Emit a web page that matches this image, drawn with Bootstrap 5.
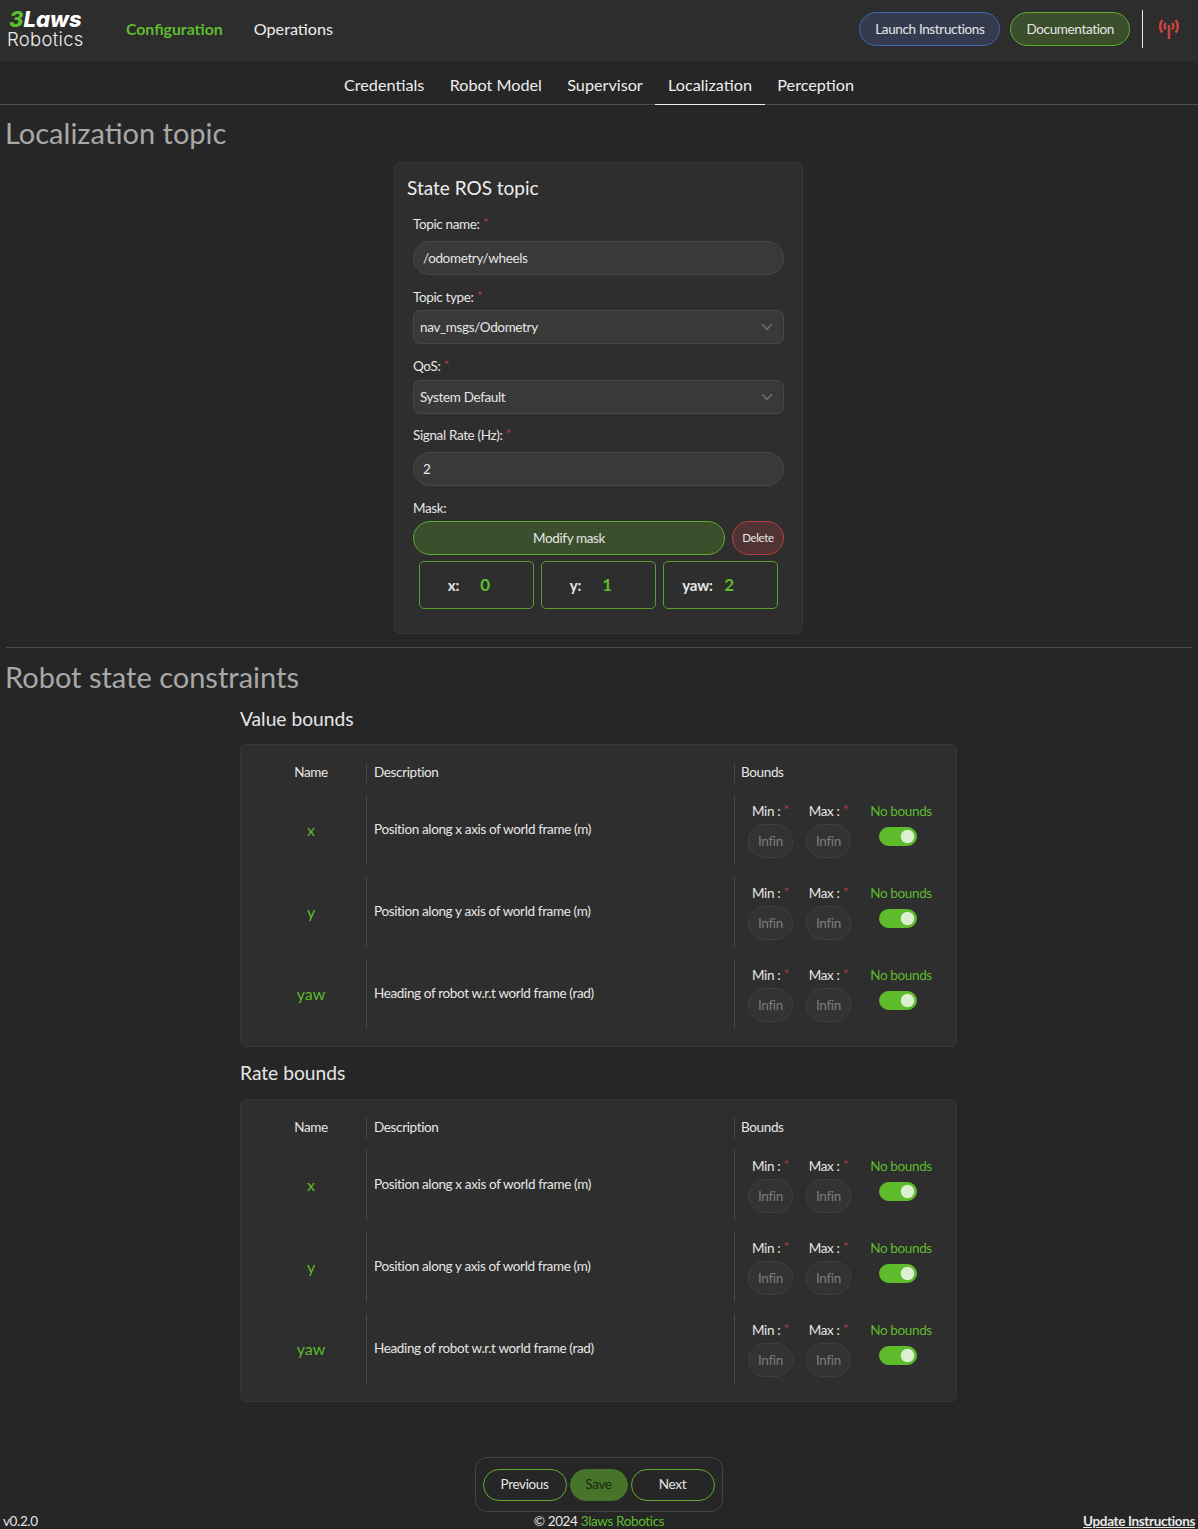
<!DOCTYPE html>
<html lang="en" data-bs-theme="dark">
<head>
    <meta charset="UTF-8">
    <meta name="viewport" content="width=device-width, initial-scale=1.0">
    <title>3Laws Robotics</title>
    <link href="https://cdn.jsdelivr.net/npm/bootstrap@5.3.3/dist/css/bootstrap.min.css" rel="stylesheet">
    <script src="https://cdn.jsdelivr.net/npm/bootstrap@5.3.3/dist/js/bootstrap.bundle.min.js"></script>
    <style>
        body { background: #262626; color: #e6e6e6; font-family: "Lato", "Liberation Sans", sans-serif; font-size: 13.5px; letter-spacing: -.36px; }
        button, input, select { letter-spacing: inherit; }
        .top-bar { height: 61px; background: #2d2d2d; padding: 0 19px 3px 8px; }
        .brand-box { width: 76px; line-height: 1; color: #eee; font-family: "Inter", sans-serif; margin-right: 42px; letter-spacing: 0; }
        .brand-top { font-weight: 800; font-style: italic; font-size: 22px; letter-spacing: 0; height: 20px; line-height: 20px; color: #fff; padding-left: 1px; }
        .brand-top span { color: #5dbb2c; }
        .brand-sub { font-weight: 300; font-size: 18.5px; height: 20px; line-height: 20px; letter-spacing: .3px; margin-left: -1px; white-space: nowrap; }
        .top-link { color: #eee; text-decoration: none; font-size: 16.2px; margin-right: 31px; letter-spacing: 0; }
        .top-link.on { color: #5dbb2c; font-weight: 700; font-size: 15.8px; }
        .pill-btn { height: 34px; border-radius: 17px; padding: 0 15px; font-size: 13.5px; color: #e6e6e6; display: inline-flex; align-items: center; justify-content: center; }
        .pill-blue { background: #353b4e; border: 1px solid #3d66ad; margin-right: 10px; }
        .pill-green { background: #3b4f2d; border: 1px solid #5dab2c; }
        .pill-red { background: #513333; border: 1px solid #b84040; padding: 0; width: 52px; font-size: 11.5px; }
        .pill-line { background: transparent; border: 1px solid #5dab2c; flex: 1 1 0; height: 32px; }
        .pill-save { background: #467429; border: 1px solid #467429; color: #1d2816; width: 58px; padding: 0; height: 32px; }
        .top-sep { width: 1px; height: 38px; background: #e6e6e6; margin: 0 16px 0 12px; }
        .sub-tabs { height: 44px; border-bottom: 1px solid #4d4d4d; }
        .sub-tab { color: #eee; text-decoration: none; font-size: 16.2px; letter-spacing: 0; padding: 5px 12.7px 0; height: 43px; display: flex; align-items: center; }
        .sub-tab.on { border-bottom: 1px solid #eee; height: 44px; }
        .page-main { padding-right: 1px; }
        .sec-title { font-size: 29px; font-weight: 400; letter-spacing: 0; color: #a8a8a8; padding-left: 5px; margin: 0; line-height: 36px; }
        .sec-first { margin-top: 10px; }
        .panel-box { background: #2e2e2e; border: 1px solid #363636; border-radius: 6px; }
        .topic-box { width: 409px; height: 472px; margin: 11px auto 0; padding: 12px 18px 0 18px; }
        .topic-title { font-size: 19px; letter-spacing: 0; line-height: 26px; color: #eee; margin: 0 0 15px -6px; font-weight: 400; }
        .fld-label { display: block; font-size: 13.5px; line-height: 17px; margin-bottom: 8px; color: #e6e6e6; }
        .lab-4 { margin-bottom: 4px; }
        .lab-5 { margin-bottom: 5px; }
        .req { color: #a83a3a; font-size: 14px; line-height: 0; vertical-align: 1px; }
        .fld-input { height: 34px; background: #393939; border: 1px solid #484848; border-radius: 17px; font-size: 13.5px; color: #e6e6e6; padding: 0 9px; box-shadow: none; }
        .fld-select { height: 34px; background-color: #393939; border: 1px solid #484848; border-radius: 7px; font-size: 13.5px; color: #e6e6e6; padding: 0 30px 0 6px; box-shadow: none;
            background-image: url("data:image/svg+xml,%3csvg xmlns='http://www.w3.org/2000/svg' viewBox='0 0 16 16'%3e%3cpath fill='none' stroke='%236b7280' stroke-linecap='round' stroke-linejoin='round' stroke-width='2' d='m2 5 6 6 6-6'/%3e%3c/svg%3e");
            background-size: 12px 12px; background-position: right 10px center; }
        .gap-14 { margin-bottom: 14px; }
        .gap-13 { margin-bottom: 13px; }
        .mask-btns { gap: 7px; }
        .mask-list { padding: 0 6px; gap: 7px; margin-top: 6px; }
        .mask-cell { flex: 1 1 0; height: 48px; border: 1px solid #5a9e2f; border-radius: 5px; font-weight: 700; font-size: 15px; letter-spacing: -.2px; color: #e6e6e6; }
        .mask-key { width: 57px; padding-left: 10px; text-align: center; white-space: nowrap; }
        .mask-val { width: 16px; text-align: center; color: #5dbb2c; font-size: 17px; }
        .rule-line { height: 1px; background: #4a4a4a; margin: 13px 5px 11px 6px; }
        .bounds-wrap { width: 717px; margin: 12px auto 0; }
        .bounds-title { font-size: 19.2px; font-weight: 400; letter-spacing: 0; color: #e6e6e6; line-height: 24px; margin: 0 0 13px; }
        .bounds-box + .bounds-title { margin-bottom: 14px; }
        .bounds-box { padding: 18px 0 17px 15px; margin-bottom: 14px; }
        .grid-row { display: flex; margin-bottom: 12px; }
        .grid-row:last-child { margin-bottom: 0; }
        .cell-name { width: 110px; display: flex; align-items: center; justify-content: center; flex: none; }
        .cell-name.val { color: #5dbb2c; font-size: 16px; letter-spacing: 0; }
        .cell-desc { width: 368px; flex: none; border-left: 1px solid #484848; padding-left: 7px; display: flex; align-items: center; }
        .cell-bound { flex: 1; border-left: 1px solid #484848; padding-left: 6px; }
        .hdr-row .cell-name, .hdr-row .cell-desc, .hdr-row .cell-bound { height: 20px; line-height: 18px; align-items: flex-start; }
        .data-row .cell-name, .data-row .cell-desc, .data-row .cell-bound { height: 70px; }
        .data-row .cell-desc { padding-bottom: 2px; }
        .limit-col { width: 45px; margin-left: 7px; margin-right: 6px; text-align: center; padding-top: 8px; line-height: 17px; white-space: nowrap; }
        .limit-input { display: block; width: 45px; height: 34px; margin: 4px 0 0 0; background: #333; border: 1px solid #3f3f3f; border-radius: 17px; color: #777; padding: 0 9px; font-size: 13.5px; box-shadow: none; }
        .limit-input::placeholder { color: #7c7c7c; opacity: 1; }
        .nobound-col { margin-left: 13px; width: 62px; padding-top: 8px; line-height: 17px; text-align: center; color: #5dbb2c; white-space: nowrap; }
        .bound-switch { margin: 7px 0 0 -6px; padding: 0; min-height: 0; height: 20px; }
        .bound-switch .form-check-input { float: none; display: block; margin: 0 auto; width: 38px; height: 19px; background-color: #5dbb2c; border-color: #5dbb2c;
            background-image: url("data:image/svg+xml,%3csvg xmlns='http://www.w3.org/2000/svg' viewBox='-4 -4 8 8'%3e%3ccircle r='3.2' fill='%23dcefcf'/%3e%3c/svg%3e"); }
        .act-box { width: 248px; height: 55px; border: 1px solid #454545; border-radius: 12px; padding: 0 7px; gap: 3px; margin: 55px auto 0; }
        .foot-row { display: grid; grid-template-columns: 1fr auto 1fr; height: 17px; line-height: 19px; padding: 0 3px; overflow: hidden; }
        .foot-row a.brand-link { color: #5dbb2c; text-decoration: none; }
        .foot-row a.upd { color: #e6e6e6; font-weight: 700; justify-self: end; }
    </style>
</head>
<body>
    <nav class="top-bar d-flex align-items-center">
        <div class="brand-box">
            <div class="brand-top"><span>3</span>Laws</div>
            <div class="brand-sub">Robotics</div>
        </div>
        <a class="top-link on" href="#">Configuration</a>
        <a class="top-link" href="#">Operations</a>
        <div class="ms-auto d-flex align-items-center">
            <button type="button" class="btn pill-btn pill-blue">Launch Instructions</button>
            <button type="button" class="btn pill-btn pill-green">Documentation</button>
            <div class="top-sep"></div>
            <svg width="20" height="20" viewBox="0 0 20 20" fill="none" stroke="#c94343" stroke-width="2.5">
                <path d="M10 6V20"/>
                <path d="M6.8 4a5.4 5.4 0 0 0 0 6.6M13.2 4a5.4 5.4 0 0 1 0 6.6"/>
                <path d="M3.4 1a10 10 0 0 0 0 12.6M16.6 1a10 10 0 0 1 0 12.6"/>
            </svg>
        </div>
    </nav>
    <div class="sub-tabs d-flex justify-content-center">
        <a class="sub-tab" href="#">Credentials</a>
        <a class="sub-tab" href="#">Robot Model</a>
        <a class="sub-tab" href="#">Supervisor</a>
        <a class="sub-tab on" href="#">Localization</a>
        <a class="sub-tab" href="#">Perception</a>
    </div>

    <main class="page-main">
        <h2 class="sec-title sec-first">Localization topic</h2>
        <div class="panel-box topic-box">
            <h5 class="topic-title">State ROS topic</h5>
            <div class="gap-14">
                <label class="fld-label">Topic name: <span class="req">*</span></label>
                <input class="form-control fld-input" value="/odometry/wheels">
            </div>
            <div class="gap-14">
                <label class="fld-label lab-4">Topic type: <span class="req">*</span></label>
                <select class="form-select fld-select"><option>nav_msgs/Odometry</option></select>
            </div>
            <div class="gap-13">
                <label class="fld-label lab-5">QoS: <span class="req">*</span></label>
                <select class="form-select fld-select"><option>System Default</option></select>
            </div>
            <div class="gap-14">
                <label class="fld-label">Signal Rate (Hz): <span class="req">*</span></label>
                <input class="form-control fld-input" value="2">
            </div>
            <label class="fld-label lab-4">Mask:</label>
            <div class="d-flex mask-btns">
                <button type="button" class="btn pill-btn pill-green flex-grow-1">Modify mask</button>
                <button type="button" class="btn pill-btn pill-red">Delete</button>
            </div>
            <div class="d-flex mask-list"></div>
        </div>

        <div class="rule-line"></div>
        <h2 class="sec-title">Robot state constraints</h2>

        <div class="bounds-wrap" id="bounds-root"></div>

        <div class="act-box d-flex align-items-center">
            <button type="button" class="btn pill-btn pill-line">Previous</button>
            <button type="button" class="btn pill-btn pill-save">Save</button>
            <button type="button" class="btn pill-btn pill-line">Next</button>
        </div>
    </main>
    <div class="foot-row">
        <span>v0.2.0</span>
        <span>© 2024 <a class="brand-link" href="#">3laws Robotics</a></span>
        <a class="upd" href="#">Update Instructions</a>
    </div>

    <script>
        const maskList = document.querySelector(".mask-list");
        [["x:", 0], ["y:", 1], ["yaw:", 2]].forEach(([label, value]) => {
            maskList.innerHTML += `<div class="mask-cell d-flex align-items-center"><span class="mask-key">${label}</span><span class="mask-val">${value}</span></div>`;
        });

        const rows = [
            ["x", "Position along x axis of world frame (m)"],
            ["y", "Position along y axis of world frame (m)"],
            ["yaw", "Heading of robot w.r.t world frame (rad)"]
        ];
        const limit = name => `
            <div class="limit-col">${name} : <span class="req">*</span>
                <input class="form-control limit-input" placeholder="Infinity">
            </div>`;
        const section = title => `
            <h5 class="bounds-title">${title}</h5>
            <div class="panel-box bounds-box">
                <div class="grid-row hdr-row">
                    <div class="cell-name">Name</div>
                    <div class="cell-desc">Description</div>
                    <div class="cell-bound">Bounds</div>
                </div>
                ${rows.map(([name, desc]) => `
                <div class="grid-row data-row">
                    <div class="cell-name val">${name}</div>
                    <div class="cell-desc">${desc}</div>
                    <div class="cell-bound d-flex">
                        ${limit("Min")}${limit("Max")}
                        <div class="nobound-col">No bounds
                            <div class="form-check form-switch bound-switch">
                                <input class="form-check-input" type="checkbox" checked>
                            </div>
                        </div>
                    </div>
                </div>`).join("")}
            </div>`;
        document.getElementById("bounds-root").innerHTML = section("Value bounds") + section("Rate bounds");
    </script>
</body>
</html>
